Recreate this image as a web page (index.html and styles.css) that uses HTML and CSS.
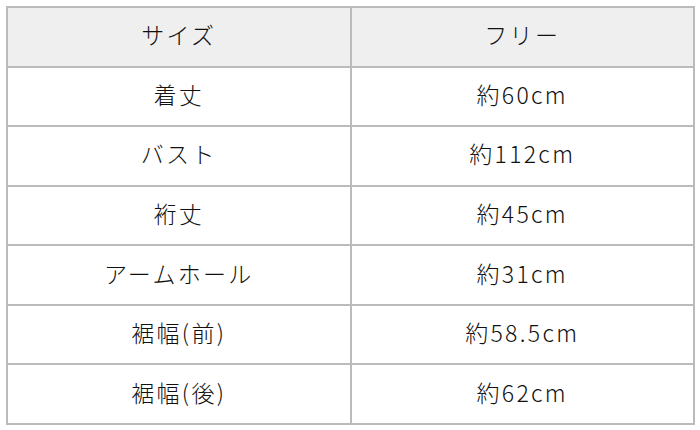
FILE: index.html
```html
<!DOCTYPE html>
<html lang="ja">
<head>
<meta charset="utf-8">
<link rel="stylesheet" href="styles.css">
</head>
<body>
<div class="wrap">
<table class="size-table">
<tr class="head"><td>サイズ</td><td>フリー</td></tr>
<tr><td>着丈</td><td>約60cm</td></tr>
<tr><td>バスト</td><td>約112cm</td></tr>
<tr><td>裄丈</td><td>約45cm</td></tr>
<tr><td>アームホール</td><td>約31cm</td></tr>
<tr><td>裾幅(前)</td><td>約58.5cm</td></tr>
<tr><td>裾幅(後)</td><td>約62cm</td></tr>
</table>
</div>
</body>
</html>
```
FILE: styles.css
```css
html, body { margin: 0; padding: 0; background: #fff; }
.wrap { padding: 6px 5px 0 6px; }
.size-table {
  border-collapse: collapse;
  width: 689px;
  height: 419px;
  table-layout: fixed;
  font-family: "Noto Sans CJK JP", "Noto Sans", sans-serif;
  font-size: 23px;
  font-weight: 300;
  letter-spacing: 2.3px;
  color: #111;
}
.size-table td {
  border: 2px solid #bbbbbb;
  text-align: center;
  vertical-align: middle;
  padding: 0 0 4px 0;
  height: 53px;
  line-height: 1;
}
.head td { background: #f0eff0; }
```
